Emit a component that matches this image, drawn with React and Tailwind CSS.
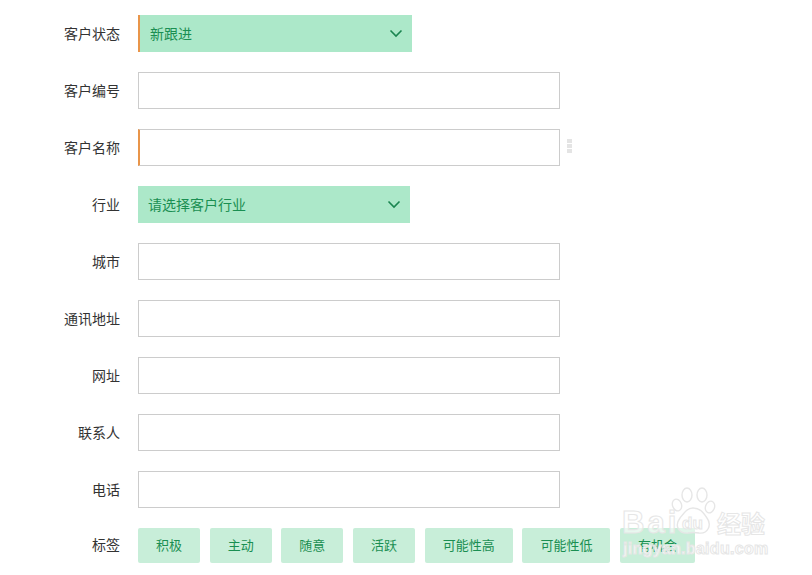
const rows = [
  { label: "客户状态", type: "select", text: "新跟进", width: "w-[274px]", mark: true },
  { label: "客户编号", type: "input" },
  { label: "客户名称", type: "input", mark: true, dots: true },
  { label: "行业", type: "select", text: "请选择客户行业", width: "w-[272px]" },
  { label: "城市", type: "input" },
  { label: "通讯地址", type: "input" },
  { label: "网址", type: "input" },
  { label: "联系人", type: "input" },
  { label: "电话", type: "input" },
];

const tags = [
  { text: "积极", width: "w-[62px]" },
  { text: "主动", width: "w-[62px]" },
  { text: "随意", width: "w-[62px]" },
  { text: "活跃", width: "w-[62px]" },
  { text: "可能性高", width: "w-[88px]" },
  { text: "可能性低", width: "w-[88px]" },
  { text: "有机会", width: "w-[75px]" },
];

const Chevron = () => (
  <svg width="14" height="9" viewBox="0 0 14 9" fill="none" stroke="#1a8550" strokeWidth="1.6">
    <path d="M1.5 1.5 L7 7 L12.5 1.5" />
  </svg>
);

const Watermark = () => (
  <div className="absolute left-[620px] top-[487px] w-[150px] h-[80px] pointer-events-none">
    <svg className="absolute left-[50px] top-0" width="50" height="50" viewBox="0 0 50 50" fill="#ffffff" fillOpacity="0.45" stroke="#e6e6e6" strokeWidth="1.4">
      <ellipse cx="7" cy="18" rx="4.5" ry="6" transform="rotate(-20 7 18)" />
      <ellipse cx="17" cy="8" rx="5" ry="7" />
      <ellipse cx="32" cy="8" rx="5" ry="7" />
      <ellipse cx="40" cy="20" rx="4.5" ry="6" transform="rotate(20 40 20)" />
      <path d="M23 21 C30 21 33 25 37 31 C42 38 38 47 29 46 C26 45.500 21 45.500 18 46 C9 47 4 39 10 31 C14 26 17 21 23 21 Z" />
    </svg>
    <div className="absolute left-[2px] top-[19px] font-['Liberation_Sans',sans-serif] text-[31px] leading-[34px] font-bold tracking-[3px] text-white/60 [-webkit-text-stroke:1px_#e6e6e6]">
      Bai
    </div>
    <div className="absolute left-[62px] top-[28px] font-['Liberation_Sans',sans-serif] text-[17px] leading-[18px] font-bold text-white/60 [-webkit-text-stroke:1px_#e6e6e6]">
      du
    </div>
    <div className="absolute left-[97px] top-[22px] font-['Noto_Sans_CJK_SC',sans-serif] text-[24px] leading-[28px] font-bold text-white/60 [-webkit-text-stroke:1px_#e6e6e6] whitespace-nowrap">
      经验
    </div>
    <div className="absolute left-[3px] top-[53px] font-['Liberation_Sans',sans-serif] text-[16px] leading-[18px] font-bold tracking-[0.3px] text-white/75 [-webkit-text-stroke:1px_#e6e6e6] whitespace-nowrap">
      jingyan.baidu.com
    </div>
  </div>
);

export default function App() {
  return (
    <div className="relative w-[812px] h-[575px] overflow-hidden bg-white pt-[15px] font-['Noto_Sans_CJK_SC','Noto_Sans',sans-serif] text-[14px]">
      <div className="flex flex-col gap-5">
        {rows.map((row) => (
          <div key={row.label} className="flex items-center h-[37px]">
            <label className="w-[120px] text-right text-[#333333]">{row.label}</label>
            <div className="ml-[18px] flex items-center">
              {row.type === "select" ? (
                <div className={`${row.width} h-[37px] flex items-center justify-between bg-[#ace8c9] pl-[10px] pr-[9px] text-[#1a8f52] ${row.mark ? "border-l-2 border-[#e9954a]" : ""}`}>
                  <span>{row.text}</span>
                  <Chevron />
                </div>
              ) : (
                <input className={`w-[422px] h-[37px] bg-white border border-[#cccccc] outline-none ${row.mark ? "border-l-2 border-l-[#e9954a]" : ""}`} />
              )}
              {row.dots && (
                <div className="ml-[7px] mb-[3px] flex flex-col gap-px">
                  <span className="w-[5px] h-1 bg-[#e4e4e4]" />
                  <span className="w-[5px] h-1 bg-[#e4e4e4]" />
                  <span className="w-[5px] h-1 bg-[#e4e4e4]" />
                </div>
              )}
            </div>
          </div>
        ))}
        <div className="flex items-center h-[35px]">
          <label className="w-[120px] mb-0.5 text-right text-[#333333]">标签</label>
          <div className="ml-[18px] flex gap-[9.7px]">
            {tags.map((tag) => (
              <div key={tag.text} className={`${tag.width} h-[35px] pb-0.5 flex items-center justify-center rounded-[2px] bg-[#c8eed9] text-[13px] text-[#1a8f52]`}>
                {tag.text}
              </div>
            ))}
          </div>
        </div>
      </div>
      <Watermark />
    </div>
  );
}
